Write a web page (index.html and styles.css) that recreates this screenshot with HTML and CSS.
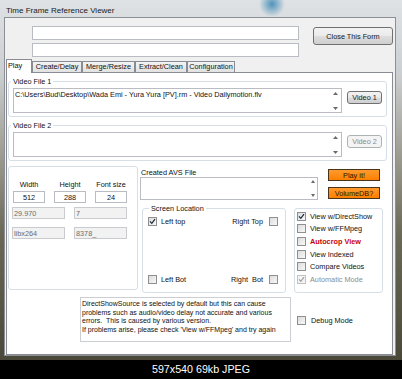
FILE: index.html
```html
<!DOCTYPE html>
<html lang="en">

<head>
    <meta charset="UTF-8">
    <title>Time Frame Reference Viewer</title>
    <link rel="stylesheet" href="styles.css">
</head>

<body>
    <div class="window">
        <div class="titlebar">Time Frame Reference Viewer</div>
        <div class="client">
            <div class="top">
                <div class="top-fields">
                    <div class="tb top-tb"></div>
                    <div class="tb top-tb"></div>
                </div>
                <div class="btn close-btn">Close This Form</div>
            </div>

            <div class="tabs">
                <div class="tab tab-active">Play</div>
                <div class="tab tab-create">Create/Delay</div>
                <div class="tab tab-merge">Merge/Resize</div>
                <div class="tab tab-extract">Extract/Clean</div>
                <div class="tab tab-config">Configuration</div>
            </div>

            <div class="panel">
                <fieldset class="group video-group">
                    <legend>Video File 1</legend>
                    <div class="video-row">
                        <div class="tb area video-area">
                            <span class="area-text">C:\Users\Bud\Desktop\Wada Emi - Yura Yura [PV].rm - Video Dailymotion.flv</span>
                            <span class="arrows">
                                <svg width="5" height="3" viewBox="0 0 5 3"><path d="M2.5 0L5 3H0Z" fill="#6a6a6a"/></svg>
                                <svg width="5" height="3" viewBox="0 0 5 3"><path d="M0 0H5L2.5 3Z" fill="#6a6a6a"/></svg>
                            </span>
                        </div>
                        <div class="btn video-btn">Video 1</div>
                    </div>
                </fieldset>

                <fieldset class="group video-group second">
                    <legend>Video File 2</legend>
                    <div class="video-row">
                        <div class="tb area video-area">
                            <span class="area-text"></span>
                            <span class="arrows">
                                <svg width="5" height="3" viewBox="0 0 5 3"><path d="M2.5 0L5 3H0Z" fill="#6a6a6a"/></svg>
                                <svg width="5" height="3" viewBox="0 0 5 3"><path d="M0 0H5L2.5 3Z" fill="#6a6a6a"/></svg>
                            </span>
                        </div>
                        <div class="btn video-btn disabled">Video 2</div>
                    </div>
                </fieldset>

                <div class="lower">
                    <div class="dims">
                        <div class="dims-head">
                            <div class="dim-col">
                                <div class="dim-label">Width</div>
                                <div class="tb dim-tb">512</div>
                            </div>
                            <div class="dim-col">
                                <div class="dim-label">Height</div>
                                <div class="tb dim-tb">288</div>
                            </div>
                            <div class="dim-col">
                                <div class="dim-label">Font size</div>
                                <div class="tb dim-tb">24</div>
                            </div>
                        </div>
                        <div class="dims-row">
                            <div class="tb off-tb">29.970</div>
                            <div class="tb off-tb">7</div>
                        </div>
                        <div class="dims-row last">
                            <div class="tb off-tb">libx264</div>
                            <div class="tb off-tb">8378_</div>
                        </div>
                    </div>

                    <div class="mid">
                        <div class="avs-row">
                            <div class="avs">
                                <div class="avs-label">Created AVS File</div>
                                <div class="tb area avs-area">
                                    <span class="area-text"></span>
                                    <span class="arrows">
                                        <svg width="4" height="3" viewBox="0 0 4 3"><path d="M2 0L4 3H0Z" fill="#6a6a6a"/></svg>
                                        <svg width="4" height="3" viewBox="0 0 4 3"><path d="M0 0H4L2 3Z" fill="#6a6a6a"/></svg>
                                    </span>
                                </div>
                            </div>
                            <div class="orange-col">
                                <div class="orange">Play it!</div>
                                <div class="orange second">VolumeDB?</div>
                            </div>
                        </div>

                        <div class="loc-row">
                            <fieldset class="group loc-group">
                                <legend>Screen Location</legend>
                                <div class="loc-body">
                                    <div class="loc-line">
                                        <div class="opt">
                                            <span class="cb"><svg width="7" height="7" viewBox="0 0 7 7"><path d="M1 3.4L2.8 5.3L6 1.1" fill="none" stroke="#1d2b3c" stroke-width="1.2"/></svg></span>
                                            <span>Left top</span>
                                        </div>
                                        <div class="opt opt-right">
                                            <span>Right Top</span>
                                            <span class="cb"></span>
                                        </div>
                                    </div>
                                    <div class="loc-line">
                                        <div class="opt">
                                            <span class="cb"></span>
                                            <span>Left Bot</span>
                                        </div>
                                        <div class="opt opt-right">
                                            <span>Right&nbsp; Bot</span>
                                            <span class="cb"></span>
                                        </div>
                                    </div>
                                </div>
                            </fieldset>

                            <div class="view-group">
                                <div class="view-line">
                                    <span class="cb"><svg width="7" height="7" viewBox="0 0 7 7"><path d="M1 3.4L2.8 5.3L6 1.1" fill="none" stroke="#1d2b3c" stroke-width="1.2"/></svg></span>
                                    <span>View w/DirectShow</span>
                                </div>
                                <div class="view-line">
                                    <span class="cb"></span>
                                    <span>View w/FFMpeg</span>
                                </div>
                                <div class="view-line">
                                    <span class="cb"></span>
                                    <span class="red">Autocrop View</span>
                                </div>
                                <div class="view-line">
                                    <span class="cb"></span>
                                    <span>View Indexed</span>
                                </div>
                                <div class="view-line">
                                    <span class="cb"></span>
                                    <span>Compare Videos</span>
                                </div>
                                <div class="view-line off">
                                    <span class="cb"><svg width="7" height="7" viewBox="0 0 7 7"><path d="M1 3.4L2.8 5.3L6 1.1" fill="none" stroke="#a0a0a0" stroke-width="1.2"/></svg></span>
                                    <span>Automatic Mode</span>
                                </div>
                            </div>
                        </div>
                    </div>
                </div>

                <div class="bottom">
                    <div class="info">
                        DirectShowSource is selected by default but this can cause<br>
                        problems such as audio/video delay not accurate and various<br>
                        errors.&nbsp; This is caused by various version.<br>
                        If problems arise, please check 'View w/FFMpeg' and try again
                    </div>
                    <div class="debug">
                        <span class="cb"></span>
                        <span>Debug Mode</span>
                    </div>
                </div>
            </div>
        </div>
    </div>

    <div class="footer">597x540 69kb JPEG</div>
</body>

</html>
```

FILE: styles.css
```css
body {
    margin: 0;
    width: 402px;
    height: 379px;
    overflow: hidden;
    background-color: #000;
    font-family: "Liberation Sans", Arial, sans-serif;
    font-size: 7.3px;
    color: #111;
}

/* window frame */

.window {
    height: 360px;
    box-sizing: border-box;
    padding: 0 6px 4px 4px;
    background:
        radial-gradient(circle at 272px 4px, rgba(30, 120, 170, 0.75) 0, rgba(30, 120, 170, 0) 13px),
        linear-gradient(#dfe2e5 0%, #cdd0d2 20%, #a3a39a 40%, #6a6856 65%, #4a4838 100%);
}

.titlebar {
    height: 17px;
    box-sizing: border-box;
    padding: 5px 0 0 2px;
    font-size: 8px;
    line-height: 12px;
    color: #1a1a1a;
}

.client {
    height: 339px;
    box-sizing: border-box;
    border: 1px solid #8c9094;
    background-color: #f0f0f0;
    padding: 8px 2px 0 1px;
}

.top {
    display: flex;
    align-items: flex-start;
}

.top-fields {
    margin-left: 26px;
    width: 267px;
    display: flex;
    flex-direction: column;
    gap: 3px;
}

.top-tb {
    height: 14px;
}

.tb {
    box-sizing: border-box;
    background-color: #fff;
    border: 1px solid #b9bcc3;
    white-space: nowrap;
}

.btn {
    box-sizing: border-box;
    border: 1px solid #707070;
    border-radius: 3px;
    background: linear-gradient(#f2f2f2 0%, #ebebeb 48%, #dddddd 52%, #cfcfcf 100%);
    display: flex;
    align-items: center;
    justify-content: center;
    color: #1a1a1a;
    white-space: nowrap;
}

.btn.disabled {
    border-color: #adb2b5;
    background: #f4f4f4;
    color: #8a8a8a;
}

.close-btn {
    margin: 1px 0 0 14px;
    width: 80px;
    height: 18px;
}

/* tabs */

.tabs {
    margin-top: 2px;
    height: 13px;
    display: flex;
    align-items: flex-end;
}

.tab {
    box-sizing: border-box;
    height: 11px;
    border: 1px solid #898c95;
    border-bottom: none;
    background: linear-gradient(#f3f3f3, #e2e2e2);
    text-align: center;
    line-height: 10px;
    white-space: nowrap;
}

.tab-active {
    position: relative;
    z-index: 1;
    width: 26px;
    height: 14px;
    margin-bottom: -1px;
    background: #fff;
    text-align: left;
    padding-left: 1px;
    line-height: 11px;
}

.tab-create { width: 50px; }
.tab-merge { width: 53px; }
.tab-extract { width: 52px; }
.tab-config { width: 48px; }

.panel {
    height: 283px;
    box-sizing: border-box;
    border: 1px solid #898c95;
    background-color: #fff;
    padding-left: 1px;
}

/* group boxes */

.group {
    margin: 0;
    box-sizing: border-box;
    min-width: 0;
    border: 1px solid #d5dfe5;
    border-radius: 3px;
}

.group legend {
    height: 9px;
    line-height: 9px;
    padding: 0 2px;
}

.video-group {
    width: 379px;
    margin-top: 4px;
    padding: 0 4px 3px 4px;
}

.video-group legend {
    margin-left: -2px;
}

.video-row {
    display: flex;
    margin-top: 2px;
}

.area {
    display: flex;
    justify-content: space-between;
}

.area-text {
    padding: 1px 0 0 1px;
    line-height: 9px;
}

.arrows {
    display: flex;
    flex-direction: column;
    justify-content: space-between;
}

.video-area {
    width: 329px;
    height: 25px;
}

.video-area .arrows {
    padding: 3px 3px 2px 0;
}

.video-btn {
    margin: 3px 0 0 5px;
    width: 35px;
    height: 13px;
}

/* lower part */

.lower {
    display: flex;
    align-items: flex-start;
    margin-top: 5px;
}

.dims {
    width: 130px;
    height: 124px;
    box-sizing: border-box;
    border: 1px solid #d5dfe5;
    border-radius: 3px;
    padding: 13px 0 0 3px;
}

.dims-head {
    display: flex;
    gap: 9px;
    margin-left: 1px;
}

.dim-col {
    width: 32px;
    display: flex;
    flex-direction: column;
    align-items: center;
}

.dim-label {
    height: 9px;
    line-height: 9px;
    white-space: nowrap;
}

.dim-tb {
    width: 32px;
    height: 12px;
    margin-top: 2px;
    text-align: center;
    line-height: 11px;
}

.dims-row {
    display: flex;
    gap: 9px;
    margin-top: 4px;
}

.dims-row.last {
    margin-top: 8px;
}

.off-tb {
    width: 53px;
    height: 12px;
    background-color: #f2f2f2;
    border-color: #c9cbcf;
    color: #6d6d6d;
    padding-left: 1px;
    line-height: 11px;
}

.mid {
    margin-left: 2px;
    width: 247px;
}

.avs-row {
    display: flex;
}

.avs {
    width: 178px;
    padding-top: 2px;
}

.avs-label {
    height: 9px;
    line-height: 9px;
    padding-left: 1px;
}

.avs-area {
    height: 23px;
}

.avs-area .arrows {
    padding: 2px 2px 2px 0;
}

.orange-col {
    margin-left: 10px;
    width: 52px;
    display: flex;
    flex-direction: column;
}

.orange {
    height: 12px;
    margin-top: 3px;
    box-sizing: border-box;
    border: 1px solid #4a3418;
    background: linear-gradient(#ff9a2e, #ff8000);
    color: #2a1600;
    display: flex;
    align-items: center;
    justify-content: center;
}

.orange.second {
    margin-top: 6px;
}

.loc-row {
    display: flex;
    align-items: flex-start;
    margin-top: 4px;
}

.loc-group {
    margin-left: 2px;
    width: 144px;
    height: 89px;
    padding: 3px 7px 8px 5px;
}

.loc-group legend {
    margin-left: 1px;
}

.loc-body {
    height: 68px;
    display: flex;
    flex-direction: column;
    justify-content: space-between;
}

.loc-line {
    height: 10px;
    display: flex;
    align-items: center;
    justify-content: space-between;
}

.opt {
    display: flex;
    align-items: center;
    gap: 4px;
}

.opt-right {
    gap: 6px;
}

.cb {
    width: 9px;
    height: 9px;
    box-sizing: border-box;
    border: 1px solid #8f8f8f;
    background: linear-gradient(135deg, #dcdcdc, #f8f8f8);
    display: flex;
    align-items: center;
    justify-content: center;
    flex-shrink: 0;
}

.view-group {
    margin: 4px 0 0 8px;
    width: 89px;
    height: 85px;
    box-sizing: border-box;
    border: 1px solid #d5dfe5;
    border-radius: 3px;
    padding: 1px 0 0 2px;
}

.view-line {
    height: 12.6px;
    display: flex;
    align-items: center;
    gap: 4px;
    white-space: nowrap;
}

.red {
    color: #c8000a;
    font-weight: bold;
}

.view-line.off {
    color: #8d8d8d;
}

.view-line.off .cb {
    border-color: #c2c2c2;
    background: #f4f4f4;
}

/* bottom */

.bottom {
    display: flex;
    margin-top: 4px;
}

.info {
    margin-left: 72px;
    width: 211px;
    height: 45px;
    box-sizing: border-box;
    border: 1px solid #cbced3;
    padding: 2px 0 0 1px;
    font-size: 7px;
    line-height: 8.6px;
    white-space: nowrap;
    overflow: hidden;
}

.debug {
    margin: 2px 0 0 6px;
    align-self: center;
    display: flex;
    align-items: center;
    gap: 5px;
}

.footer {
    height: 19px;
    line-height: 19px;
    text-align: center;
    color: #fff;
    font-size: 10.7px;
}
```
